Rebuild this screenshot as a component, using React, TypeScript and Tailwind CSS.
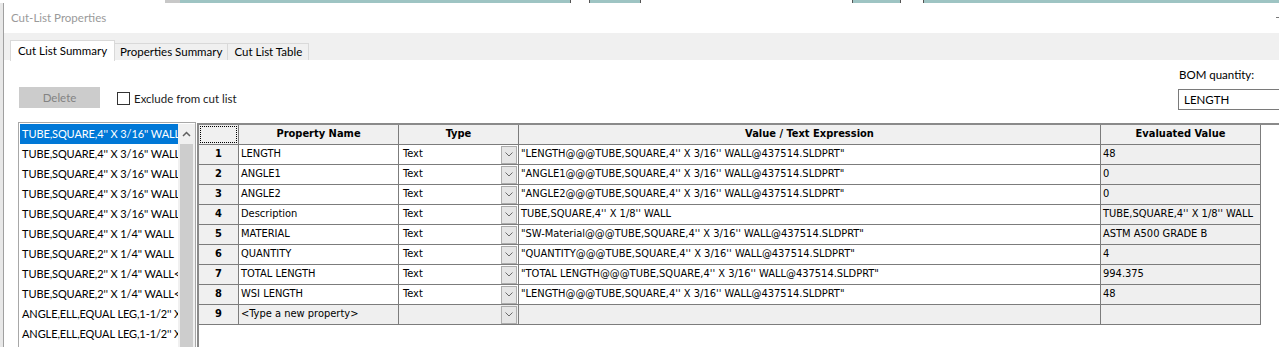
import React from 'react';

const listItems: string[] = [
  "TUBE,SQUARE,4'' X 3/16'' WALL",
  "TUBE,SQUARE,4'' X 3/16'' WALL",
  "TUBE,SQUARE,4'' X 3/16'' WALL",
  "TUBE,SQUARE,4'' X 3/16'' WALL",
  "TUBE,SQUARE,4'' X 3/16'' WALL",
  "TUBE,SQUARE,4'' X 1/4'' WALL",
  "TUBE,SQUARE,2'' X 1/4'' WALL",
  "TUBE,SQUARE,2'' X 1/4'' WALL<1>",
  "TUBE,SQUARE,2'' X 1/4'' WALL<2>",
  "ANGLE,ELL,EQUAL LEG,1-1/2'' X 1-1/2''",
  "ANGLE,ELL,EQUAL LEG,1-1/2'' X 1-1/2''",
];

interface PropRow {
  n: number;
  name: string;
  type: string;
  value: string;
  evaluated: string;
}

const rows: PropRow[] = [
  { n: 1, name: 'LENGTH', type: 'Text', value: `"LENGTH@@@TUBE,SQUARE,4'' X 3/16'' WALL@437514.SLDPRT"`, evaluated: '48' },
  { n: 2, name: 'ANGLE1', type: 'Text', value: `"ANGLE1@@@TUBE,SQUARE,4'' X 3/16'' WALL@437514.SLDPRT"`, evaluated: '0' },
  { n: 3, name: 'ANGLE2', type: 'Text', value: `"ANGLE2@@@TUBE,SQUARE,4'' X 3/16'' WALL@437514.SLDPRT"`, evaluated: '0' },
  { n: 4, name: 'Description', type: 'Text', value: `TUBE,SQUARE,4'' X 1/8'' WALL`, evaluated: `TUBE,SQUARE,4'' X 1/8'' WALL` },
  { n: 5, name: 'MATERIAL', type: 'Text', value: `"SW-Material@@@TUBE,SQUARE,4'' X 3/16'' WALL@437514.SLDPRT"`, evaluated: 'ASTM A500 GRADE B' },
  { n: 6, name: 'QUANTITY', type: 'Text', value: `"QUANTITY@@@TUBE,SQUARE,4'' X 3/16'' WALL@437514.SLDPRT"`, evaluated: '4' },
  { n: 7, name: 'TOTAL LENGTH', type: 'Text', value: `"TOTAL LENGTH@@@TUBE,SQUARE,4'' X 3/16'' WALL@437514.SLDPRT"`, evaluated: '994.375' },
  { n: 8, name: 'WSI LENGTH', type: 'Text', value: `"LENGTH@@@TUBE,SQUARE,4'' X 3/16'' WALL@437514.SLDPRT"`, evaluated: '48' },
];

const ui = "font-['Lato','Liberation_Sans',sans-serif]";
const gridFont = "font-['DejaVu_Sans_Condensed','Liberation_Sans',sans-serif]";

const Chevron: React.FC = () => (
  <svg width="8" height="5" viewBox="0 0 8 5" fill="none">
    <path d="M0.5 0.5 L4 4 L7.5 0.5" stroke="#6a6a6a" strokeWidth="1" />
  </svg>
);

const TypeCell: React.FC<{ text: string; gray?: boolean }> = ({ text, gray }) => (
  <div className={`h-[20px] border-r border-b border-[#7c7c7c] flex items-center overflow-hidden ${gray ? 'bg-[#efefef]' : 'bg-white'}`}>
    <span className="flex-1 min-w-0 pl-[4px] whitespace-nowrap overflow-hidden">{text}</span>
    <div className="w-[16px] h-[18px] mr-[1px] shrink-0 bg-[#e6e6e6] border border-[#adadad] flex items-center justify-center">
      <Chevron />
    </div>
  </div>
);

const cell = 'h-[20px] border-r border-b border-[#7c7c7c] flex items-center overflow-hidden whitespace-nowrap';

export default function App() {
  return (
    <div className={`w-[1279px] h-[347px] overflow-hidden bg-white text-black flex flex-col ${ui}`}>
      {/* background drawing peeking over the top */}
      <div className="h-[3px] flex shrink-0">
        <div className="w-[165px] bg-white" />
        <div className="w-[15px] bg-[#c8c8c8]" />
        <div className="w-[390px] bg-[#9ec4c3]" />
        <div className="w-[20px] bg-white border-x border-[#555]" />
        <div className="w-[50px] bg-[#9ec4c3]" />
        <div className="w-[213px] bg-white border-x border-[#555]" />
        <div className="w-[47px] bg-[#9ec4c3]" />
        <div className="w-[24px] bg-white border-x border-[#555]" />
        <div className="flex-1 bg-[#9ec4c3]" />
      </div>

      <div className="flex flex-1 min-h-0">
        <div className="w-[3px] bg-[#e8e8e8] shrink-0" />
        <div className="flex-1 flex flex-col border-l border-[#a0a0a0] min-w-0">
          {/* title bar */}
          <div className="h-[30px] shrink-0 flex items-center pl-[7px] justify-between">
            <span className="text-[11.5px] text-[#9a9a9a]">Cut-List Properties</span>
            <div className="w-[3px] h-[1px] bg-[#777] mb-[2px]" />
          </div>

          {/* tabs */}
          <div className="h-[27px] shrink-0 bg-[#f0f0f0] flex items-end pl-[6px] text-[11.5px]">
            <div className="h-[21px] px-[7px] bg-white border border-b-0 border-[#d9d9d9] flex items-center relative top-[1px]">
              Cut List Summary
            </div>
            <div className="h-[17px] px-[5px] bg-[#f0f0f0] border-t border-r border-[#d9d9d9] flex items-center">
              Properties Summary
            </div>
            <div className="h-[17px] px-[6px] bg-[#f0f0f0] border-t border-r border-[#d9d9d9] flex items-center">
              Cut List Table
            </div>
          </div>

          {/* controls */}
          <div className="h-[62px] shrink-0 flex justify-between text-[11.5px]">
            <div className="flex items-start pt-[27px] pl-[15px]">
              <div className="w-[81px] h-[21px] bg-[#cccccc] text-[#838383] flex items-center justify-center">
                Delete
              </div>
              <div className="flex items-center ml-[17px] mt-[3px]">
                <div className="w-[13px] h-[13px] border border-[#333] bg-white" />
                <span className="ml-[4px] text-[#1a1a1a]">Exclude from cut list</span>
              </div>
            </div>
            <div className="flex flex-col w-[101px] pt-[7px]">
              <span className="pl-[1px] h-[16px] leading-[16px]">BOM quantity:</span>
              <div className="mt-[6px] h-[21px] w-[120px] border border-[#7a7a7a] bg-white flex items-center pl-[5px]">
                LENGTH
              </div>
            </div>
          </div>

          {/* list + grid */}
          <div className="flex flex-1 min-h-0 pl-[14px]">
            <div className="w-[178px] shrink-0 border border-b-0 border-[#a8a8a8] flex pt-[1px] pl-[1px]">
              <div className="flex-1 min-w-0 flex flex-col text-[11px] tracking-[-0.1px]">
                {listItems.map((item, i) => (
                  <div
                    key={i}
                    className={`h-[20px] shrink-0 pl-[2px] leading-[20px] whitespace-nowrap overflow-hidden ${
                      i === 0 ? 'bg-[#0078d7] text-white' : 'text-black'
                    }`}
                  >
                    {item}
                  </div>
                ))}
              </div>
              <div className="w-[17px] shrink-0 bg-[#f0f0f0] flex flex-col items-center">
                <div className="h-[20px] flex items-center justify-center">
                  <svg width="9" height="6" viewBox="0 0 9 6" fill="none">
                    <path d="M1 5 L4.5 1.5 L8 5" stroke="#606060" strokeWidth="1.5" />
                  </svg>
                </div>
                <div className="w-[13px] flex-1 bg-[#cdcdcd]" />
              </div>
            </div>

            <div className={`flex-1 ml-[1px] mt-[1px] border-l-2 border-t-2 border-[#8a8a8a] text-[11px] ${gridFont}`}>
              <div className="grid grid-cols-[40px_160px_120px_582px_160px] w-[1062px]">
                {/* header */}
                <div className={`${cell} bg-[#f0f0f0] p-[1px]`}>
                  <div className="w-full h-full border border-dotted border-black" />
                </div>
                <div className={`${cell} bg-[#f0f0f0] justify-center font-bold`}>Property Name</div>
                <div className={`${cell} bg-[#f0f0f0] justify-center font-bold`}>Type</div>
                <div className={`${cell} bg-[#f0f0f0] justify-center font-bold`}>Value / Text Expression</div>
                <div className={`${cell} bg-[#f0f0f0] justify-center font-bold`}>Evaluated Value</div>

                {rows.map((r) => (
                  <React.Fragment key={r.n}>
                    <div className={`${cell} bg-[#f0f0f0] justify-center font-bold`}>{r.n}</div>
                    <div className={`${cell} bg-white pl-[2px]`}>{r.name}</div>
                    <TypeCell text={r.type} />
                    <div className={`${cell} bg-white pl-[2px]`}>{r.value}</div>
                    <div className={`${cell} bg-[#efefef] pl-[2px]`}>{r.evaluated}</div>
                  </React.Fragment>
                ))}

                <div className={`${cell} bg-[#f0f0f0] justify-center font-bold`}>9</div>
                <div className={`${cell} bg-[#efefef] pl-[2px]`}>&lt;Type a new property&gt;</div>
                <TypeCell text="" gray />
                <div className={`${cell} bg-[#efefef]`} />
                <div className={`${cell} bg-[#efefef]`} />
              </div>
            </div>
          </div>
        </div>
      </div>
    </div>
  );
}
